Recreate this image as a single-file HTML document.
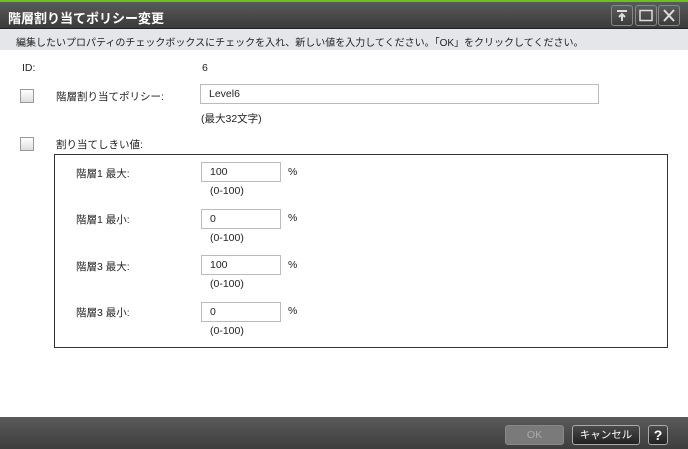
<!DOCTYPE html>
<html><head><meta charset="utf-8"><style>
*{box-sizing:border-box;margin:0;padding:0}
body{width:688px;height:449px;background:#fff;font-family:"Liberation Sans","Noto Sans CJK JP",sans-serif;font-size:10.5px;color:#222;position:relative;overflow:hidden}
.a{position:absolute;white-space:nowrap}
.title{left:0;top:0;width:688px;height:29px;background:linear-gradient(#5a5a5a,#3a3a3a);border-top:2px solid #6ec01e;border-bottom:1px solid #222}
.title span{position:absolute;left:8px;top:6px;color:#fff;font-weight:bold;font-size:13px}
.wb{top:5px;width:22px;height:21px;border:1px solid #888;border-radius:3px;background:linear-gradient(#5c5c5c,#3c3c3c)}
.wb svg{position:absolute;left:0;top:0}
.bar{left:0;top:29px;width:688px;height:21px;background:#e4e6e9}
.cb{width:14px;height:14px;border:1px solid #999;background:linear-gradient(#fff,#ddd)}
.in{border:1px solid #bbb;background:#fff;height:20px;padding:3px 8px}
.foot{left:0;top:417px;width:688px;height:32px;background:linear-gradient(#5a5a5a,#3e3e3e)}
.btn{top:425px;height:20px;border-radius:3px;text-align:center;line-height:18px}
</style></head><body>
<div class="a title"><span>階層割り当てポリシー変更</span></div>
<div class="a wb" style="left:611px"><svg width="20" height="19"><path d="M5 5H15M10 8V15M7 11L10 8L13 11" stroke="#ddd" stroke-width="2" fill="none"/></svg></div>
<div class="a wb" style="left:635px"><svg width="20" height="19"><rect x="4" y="4.5" width="12" height="10" stroke="#ddd" stroke-width="1.5" fill="none"/></svg></div>
<div class="a wb" style="left:658px"><svg width="20" height="19"><path d="M5 4L15 15M15 4L5 15" stroke="#ddd" stroke-width="2"/></svg></div>
<div class="a bar"></div>
<div class="a" style="left:16px;top:34px;font-size:10px">編集したいプロパティのチェックボックスにチェックを入れ、新しい値を入力してください。「OK」をクリックしてください。</div>
<div class="a" style="left:22px;top:62px">ID:</div>
<div class="a" style="left:202px;top:62px">6</div>
<div class="a cb" style="left:20px;top:89px"></div>
<div class="a" style="left:56px;top:89px">階層割り当てポリシー:</div>
<div class="a in" style="left:200px;top:84px;width:399px">Level6</div>
<div class="a" style="left:201px;top:111px">(最大32文字)</div>
<div class="a cb" style="left:20px;top:137px"></div>
<div class="a" style="left:56px;top:137px">割り当てしきい値:</div>
<div class="a" style="left:54px;top:154px;width:614px;height:194px;border:1px solid #333"></div>
<div class="a" style="left:76px;top:166px">階層1 最大:</div>
<div class="a in" style="left:201px;top:162px;width:80px">100</div><div class="a" style="left:288px;top:166px">%</div>
<div class="a" style="left:210px;top:185px">(0-100)</div>
<div class="a" style="left:76px;top:212px">階層1 最小:</div>
<div class="a in" style="left:201px;top:209px;width:80px">0</div><div class="a" style="left:288px;top:212px">%</div>
<div class="a" style="left:210px;top:232px">(0-100)</div>
<div class="a" style="left:76px;top:259px">階層3 最大:</div>
<div class="a in" style="left:201px;top:255px;width:80px">100</div><div class="a" style="left:288px;top:259px">%</div>
<div class="a" style="left:210px;top:278px">(0-100)</div>
<div class="a" style="left:76px;top:305px">階層3 最小:</div>
<div class="a in" style="left:201px;top:302px;width:80px">0</div><div class="a" style="left:288px;top:305px">%</div>
<div class="a" style="left:210px;top:325px">(0-100)</div>
<div class="a foot"></div>
<div class="a btn" style="left:505px;width:59px;background:#7a7a7a;color:#aaa;border:1px solid #888">OK</div>
<div class="a btn" style="left:572px;width:68px;background:linear-gradient(#4a4a4a,#222);color:#fff;border:1px solid #aaa">キャンセル</div>
<div class="a btn" style="left:648px;width:20px;background:linear-gradient(#4a4a4a,#222);color:#fff;border:1px solid #aaa;font-weight:bold;font-size:14px">?</div>
</body></html>
